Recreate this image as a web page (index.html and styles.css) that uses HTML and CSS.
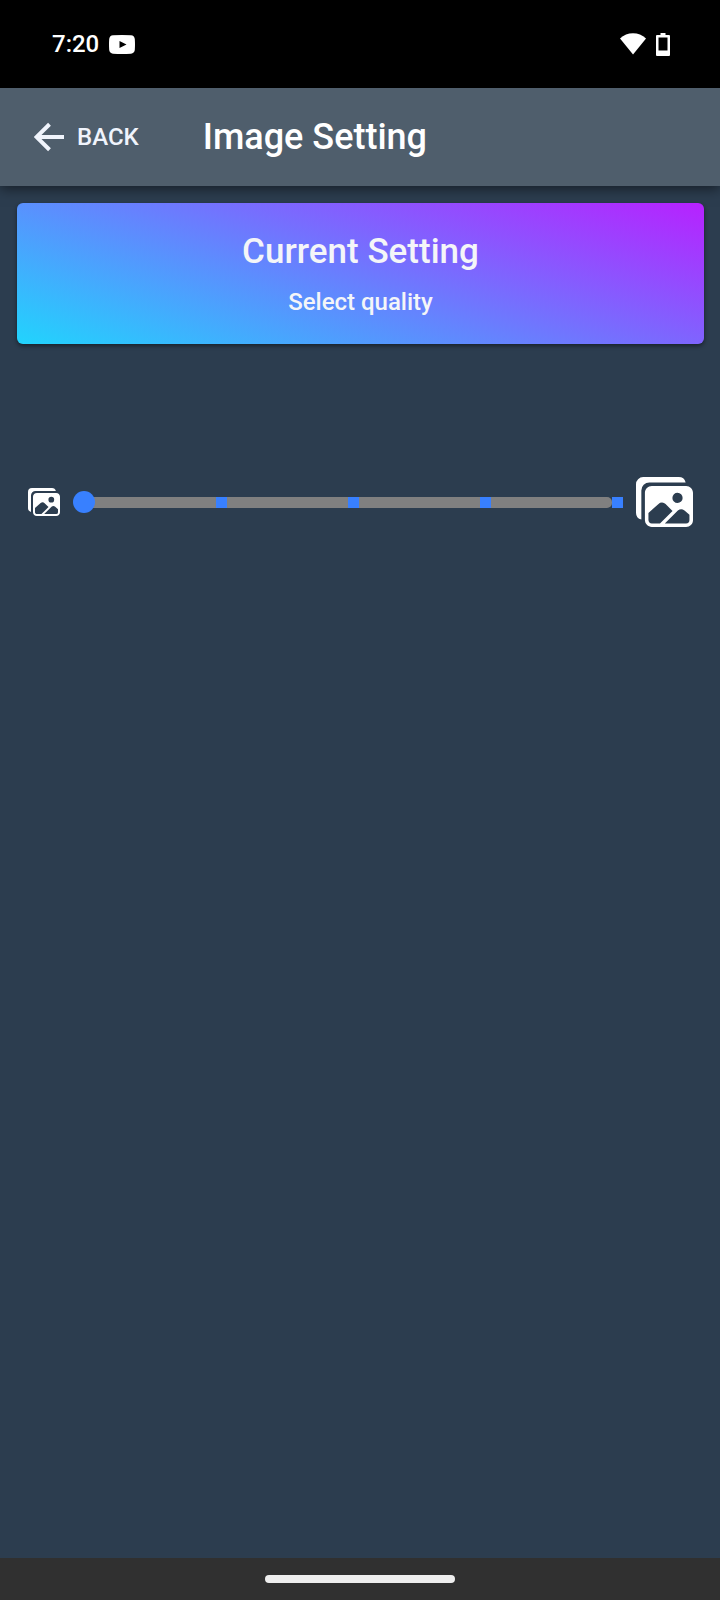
FILE: index.html
```html
<!DOCTYPE html>
<html lang="en">
<head>
<meta charset="utf-8">
<meta name="viewport" content="width=device-width, initial-scale=1">
<title>Image Setting</title>
<link rel="stylesheet" href="styles.css">
</head>
<body>
<svg width="0" height="0" class="defs" aria-hidden="true">
  <symbol id="images" viewBox="0 32 512 448">
    <path fill="currentColor" d="M450.29 112H142c-34 0-62 27.51-62 61.33v245.34C80 452.49 108 480 142 480h308c34 0 62-26.18 62-60V173.33C512 139.51 484.32 112 450.29 112Zm-77.15 61.34a46 46 0 1 1-46.28 46 46.19 46.19 0 0 1 46.28-46Zm-231.55 276c-17 0-29.86-13.75-29.86-30.66v-64.83l90.46-80.79a46.54 46.54 0 0 1 63.44 1.83L328.27 337l-113 112.33ZM480 418.67a30.67 30.67 0 0 1-30.71 30.66H259L376.08 333a46.24 46.24 0 0 1 59.44-.16L480 370.59Z"/>
    <path fill="currentColor" d="M384 32H64A64 64 0 0 0 0 96v256a64.11 64.11 0 0 0 48 62V152a72 72 0 0 1 72-72h326a64.11 64.11 0 0 0-62-48Z"/>
  </symbol>
</svg>
<div class="status">
  <div class="status-group">
    <span class="clock">7:20</span>
    <svg class="youtube" viewBox="0 0 26 19" aria-hidden="true"><path fill="#fff" fill-rule="evenodd" d="M4 .3Q13-.3 22 .3 25.300.6 25.800 4 26.200 9.500 25.800 15 25.300 18.400 22 18.700 13 19.300 4 18.700.7 18.400.2 15-.2 9.500.2 4 .7.6 4 .3ZM10.500 6v7l7-3.500Z"/></svg>
  </div>
  <div class="status-group status-right">
    <svg class="wifi" viewBox="0 0 26 22" aria-hidden="true"><path fill="#fff" d="M0 5.500C7-1.500 19-1.500 26 5.500L13 21.500Z"/></svg>
    <svg class="battery" viewBox="0 0 14 23" aria-hidden="true"><path fill="#fff" fill-rule="evenodd" d="M4.500 0h5v2H13q1 0 1 1v19q0 1-1 1H1q-1 0-1-1V3q0-1 1-1h3.500ZM2.500 4.500v13h9v-13Z"/></svg>
  </div>
</div>
<header class="toolbar">
  <button class="back" type="button">
    <svg class="arrow" viewBox="0 0 30 30" aria-hidden="true"><path d="M15.500 2.200 2.500 15 15.500 27.800M3 15H30" fill="none" stroke="currentColor" stroke-width="4"/></svg>
    <span>BACK</span>
  </button>
  <h1 class="title">Image Setting</h1>
</header>
<main class="content">
  <section class="card">
    <h2 class="card-title">Current Setting</h2>
    <p class="card-text">Select quality</p>
  </section>
  <div class="quality">
    <svg class="icon-small" aria-hidden="true"><use href="#images"/></svg>
    <div class="range">
      <div class="track"></div>
      <div class="ticks"><i></i><i></i><i></i><i></i><i></i></div>
      <input type="range" min="0" max="4" step="1" value="0" aria-label="Select quality">
    </div>
    <svg class="icon-large" aria-hidden="true"><use href="#images"/></svg>
  </div>
</main>
<footer class="navbar"><div class="handle"></div></footer>
</body>
</html>
```
FILE: styles.css
```css
* {
  box-sizing: border-box;
}

body {
  margin: 0;
  min-height: 100vh;
  display: flex;
  flex-direction: column;
  background: #2c3d4f;
  color: #fff;
  font-family: Roboto, sans-serif;
}

svg {
  display: block;
  flex: none;
}

.defs {
  position: absolute;
}

.status {
  display: flex;
  justify-content: space-between;
  align-items: center;
  height: 88px;
  padding: 0 50px 0 52px;
  background: #000;
}

.status-group {
  display: flex;
  align-items: center;
  gap: 10px;
}

.clock {
  font-size: 24px;
  font-weight: 500;
}

.youtube {
  width: 26px;
  height: 19px;
}

.wifi {
  width: 26px;
  height: 22px;
}

.battery {
  width: 14px;
  height: 23px;
}

.toolbar {
  display: flex;
  align-items: center;
  gap: 64px;
  height: 98px;
  padding: 0 34px;
  background: #4f5e6c;
  box-shadow: 0 3px 12px rgba(0, 0, 0, 0.5);
}

.back {
  display: flex;
  align-items: center;
  gap: 13px;
  padding: 0;
  border: 0;
  background: none;
  color: #f0f4fc;
  font: 500 24px/32px Roboto, sans-serif;
}

.arrow {
  width: 30px;
  height: 30px;
}

.title {
  margin: 0;
  font-size: 36px;
  line-height: 44px;
  font-weight: 500;
}

.content {
  flex: 1;
  padding: 17px 16px 17px 17px;
}

.card {
  padding: 27px 16px 26px;
  border-radius: 6px;
  background: linear-gradient(19deg, #21d4fd 0%, #b721ff 100%);
  box-shadow: 0 2px 4px rgba(0, 0, 0, 0.45);
  color: #f4f5f8;
  text-align: center;
}

.card-title {
  margin: 0;
  font-size: 35px;
  line-height: 44px;
  font-weight: 500;
}

.card-text {
  margin: 0;
  padding-top: 12px;
  font-size: 24px;
  line-height: 32px;
  font-weight: 500;
}

.quality {
  display: flex;
  align-items: center;
  gap: 13px;
  margin-top: 133px;
  padding: 0 11px;
}

.icon-small {
  width: 32px;
  height: 28px;
}

.icon-large {
  width: 57px;
  height: 50px;
}

.range {
  position: relative;
  flex: 1;
  height: 22px;
}

.track {
  position: absolute;
  inset: 6px 11px 5px;
  border-radius: 5px;
  background: #808080;
}

.ticks {
  position: absolute;
  inset: 6px 0 5px 11px;
  display: flex;
  justify-content: space-between;
}

.ticks i {
  width: 11px;
  background: #3880ff;
}

.ticks i:first-child {
  visibility: hidden;
}

.range input {
  appearance: none;
  position: absolute;
  inset: 0;
  width: 100%;
  height: 100%;
  margin: 0;
  background: none;
}

.range input::-webkit-slider-thumb {
  appearance: none;
  width: 22px;
  height: 22px;
  border: 0;
  border-radius: 50%;
  background: #3880ff;
}

.navbar {
  display: flex;
  justify-content: center;
  align-items: center;
  height: 42px;
  background: #303030;
}

.handle {
  width: 190px;
  height: 8px;
  border-radius: 4px;
  background: #eee;
}
```
